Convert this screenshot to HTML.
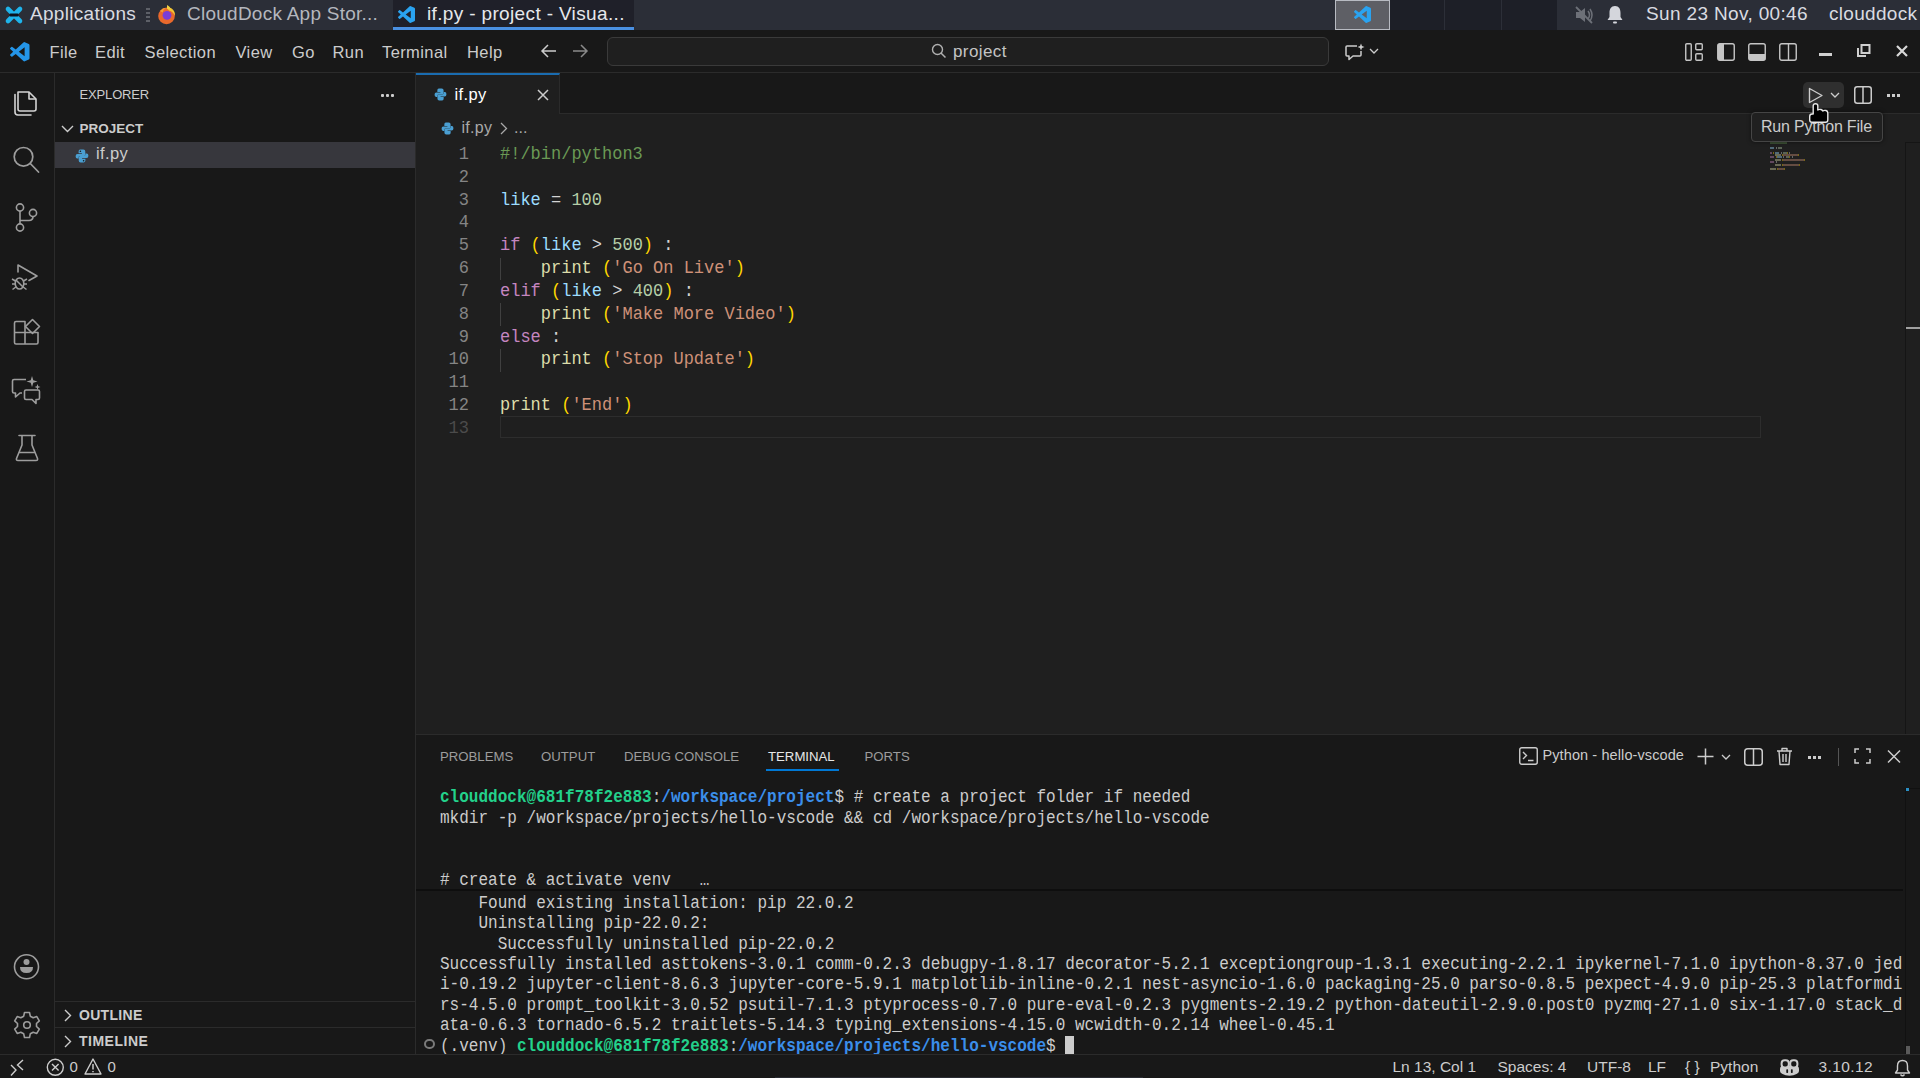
<!DOCTYPE html>
<html><head><meta charset="utf-8">
<style>
*{margin:0;padding:0;box-sizing:border-box}
html,body{width:1920px;height:1078px;overflow:hidden;background:#181818;font-family:"Liberation Sans",sans-serif;color:#cccccc}
.a{position:absolute;white-space:pre}
.mono{font-family:"Liberation Mono",monospace}
svg{position:absolute;overflow:visible}
/* top panel */
#top{position:absolute;left:0;top:0;width:1920px;height:30px;background:#2b2e37}
#menubar{position:absolute;left:0;top:30px;width:1920px;height:43px;background:#181818;border-bottom:1px solid #2b2b2b}
#act{position:absolute;left:0;top:73px;width:55px;height:981px;background:#181818;border-right:1px solid #2b2b2b}
#side{position:absolute;left:55px;top:73px;width:361px;height:981px;background:#181818;border-right:1px solid #2b2b2b}
#editor{position:absolute;left:416px;top:73px;width:1504px;height:661px;background:#1f1f1f}
#tabs{position:absolute;left:416px;top:73px;width:1504px;height:41px;background:#181818;border-bottom:1px solid #2b2b2b}
#tab1{position:absolute;left:416px;top:73px;width:144px;height:41px;background:#1f1f1f;border-top:2px solid #1a6cb0;border-right:1px solid #2b2b2b}
#panel{position:absolute;left:416px;top:734px;width:1504px;height:320px;background:#181818;border-top:1px solid #2b2b2b}
#status{position:absolute;left:0;top:1054px;width:1920px;height:24px;background:#181818;border-top:1px solid #2b2b2b}
.code{font-family:"Liberation Mono",monospace;font-size:17px;line-height:22.83px;transform:scaleY(1.1);transform-origin:0 41.6%}
.term{font-family:"Liberation Mono",monospace;font-size:16.05px;line-height:20.43px;color:#cccccc;transform:scaleY(1.1);transform-origin:0 40%}
.ln{color:#6e7681;text-align:right;width:52px}
.cm{color:#6a9955}.vr{color:#9cdcfe}.nu{color:#b5cea8}.kw{color:#c586c0}.fn{color:#dcdcaa}.st{color:#ce9178}.br{color:#ffd700}.op{color:#d4d4d4}
.g{color:#23d18b;font-weight:bold}.bl{color:#3b8eea;font-weight:bold}
.ic{stroke:#c5c5c5;fill:none;stroke-width:1.4;stroke-linecap:round;stroke-linejoin:round}
</style></head><body>
<div id="top"></div>
<div id="menubar"></div>

<!-- TOP PANEL -->
<svg style="left:5px;top:5.5px" width="18" height="18" viewBox="0 0 18 18"><path d="M3 3 L15 15 M15 3 L3 15" stroke="#1eb4ec" stroke-width="4.6" stroke-linecap="round"/><rect x="4.5" y="7.6" width="9" height="2.8" rx="1" fill="#0c121c"/></svg>
<div class="a" style="left:30px;top:3px;font-size:19px;letter-spacing:0.3px;color:#d9dbe1">Applications</div>
<div style="position:absolute;left:146px;top:8px;width:4px;height:14px;background:repeating-linear-gradient(#73767d 0 2px,transparent 2px 4px);opacity:.7"></div>
<svg style="left:156px;top:4px" width="21" height="21" viewBox="0 0 21 21"><circle cx="10.5" cy="12" r="8.3" fill="#e9692c"/><path d="M10.5 3.7 Q16 3 18.5 8 Q19.3 10.5 18.8 12 Q17.5 7.5 13 6.5Z" fill="#f4c430"/><path d="M11 1 Q14.5 2.5 15 6 Q13 4.5 11 5Z" fill="#f0d040"/><circle cx="11" cy="11.3" r="4.4" fill="#7a3ed6"/><path d="M4 7 Q6.5 3.8 10 3.7 Q7 5.5 6.8 8.5Z" fill="#f39c35"/></svg>
<div class="a" style="left:187px;top:3px;font-size:19px;letter-spacing:0.25px;color:#b4b7be">CloudDock App Stor...</div>
<div style="position:absolute;left:393px;top:0;width:241px;height:30px;background:#1f2029"></div>
<div style="position:absolute;left:393px;top:27px;width:241px;height:3px;background:#4a90e2"></div>
<svg style="left:398px;top:6px" width="17" height="17" viewBox="0 0 100 100"><path d="M96.46 10.8 L75.86 0.87 A6.23 6.23 0 0 0 68.76 2.08 L29.36 38.04 L12.19 25.01 A4.16 4.16 0 0 0 6.87 25.25 L1.36 30.26 A4.17 4.17 0 0 0 1.36 36.42 L16.25 50 L1.36 63.58 A4.17 4.17 0 0 0 1.36 69.74 L6.87 74.75 A4.16 4.16 0 0 0 12.19 74.99 L29.36 61.96 L68.76 97.92 A6.22 6.22 0 0 0 75.86 99.13 L96.46 89.21 A6.25 6.25 0 0 0 100 83.6 V16.4 A6.25 6.25 0 0 0 96.46 10.8Z M75.02 72.7 L45.11 50 L75.02 27.3Z" fill="#2aa3f0" fill-rule="evenodd"/></svg>
<div class="a" style="left:427px;top:3px;font-size:19px;letter-spacing:0.35px;color:#e6e8ec">if.py - project - Visua...</div>
<div style="position:absolute;left:1390px;top:0;width:167px;height:30px;background:#1d1f27"></div>
<div style="position:absolute;left:1444px;top:0;width:1px;height:30px;background:#2c2f38"></div>
<div style="position:absolute;left:1501px;top:0;width:1px;height:30px;background:#2c2f38"></div>
<div style="position:absolute;left:1335px;top:0;width:55px;height:30px;background:#5e5f65;border:1px solid #b8bbc2"></div>
<svg style="left:1354px;top:6px" width="17" height="17" viewBox="0 0 100 100"><path d="M96.46 10.8 L75.86 0.87 A6.23 6.23 0 0 0 68.76 2.08 L29.36 38.04 L12.19 25.01 A4.16 4.16 0 0 0 6.87 25.25 L1.36 30.26 A4.17 4.17 0 0 0 1.36 36.42 L16.25 50 L1.36 63.58 A4.17 4.17 0 0 0 1.36 69.74 L6.87 74.75 A4.16 4.16 0 0 0 12.19 74.99 L29.36 61.96 L68.76 97.92 A6.22 6.22 0 0 0 75.86 99.13 L96.46 89.21 A6.25 6.25 0 0 0 100 83.6 V16.4 A6.25 6.25 0 0 0 96.46 10.8Z M75.02 72.7 L45.11 50 L75.02 27.3Z" fill="#2aa3f0" fill-rule="evenodd"/></svg>
<svg style="left:1574px;top:6px" width="20" height="18" viewBox="0 0 20 18"><path d="M2 6 H6 L11 2 V16 L6 12 H2Z" fill="#6d7078"/><path d="M14 5 Q17 9 14 13 M16 3 Q20 9 16 15" stroke="#6d7078" stroke-width="1.5" fill="none"/><path d="M2 1 L18 17" stroke="#6d7078" stroke-width="1.8"/></svg>
<svg style="left:1606px;top:5px" width="18" height="20" viewBox="0 0 18 20"><path d="M9 1 C5 1 3.5 4 3.5 8 V12 L1.5 15 H16.5 L14.5 12 V8 C14.5 4 13 1 9 1Z" fill="#d4d6dc"/><rect x="7" y="16.5" width="4" height="2" rx="1" fill="#d4d6dc"/></svg>
<div class="a" style="left:1646px;top:3px;font-size:19px;letter-spacing:0.35px;color:#d9dbe1">Sun 23 Nov, 00:46</div>
<div class="a" style="left:1829px;top:3px;font-size:19px;letter-spacing:0.3px;color:#d9dbe1">clouddock</div>


<!-- MENUBAR -->
<svg style="left:9.5px;top:41.5px" width="19.5" height="19.5" viewBox="0 0 100 100"><path d="M96.46 10.8 L75.86 0.87 A6.23 6.23 0 0 0 68.76 2.08 L29.36 38.04 L12.19 25.01 A4.16 4.16 0 0 0 6.87 25.25 L1.36 30.26 A4.17 4.17 0 0 0 1.36 36.42 L16.25 50 L1.36 63.58 A4.17 4.17 0 0 0 1.36 69.74 L6.87 74.75 A4.16 4.16 0 0 0 12.19 74.99 L29.36 61.96 L68.76 97.92 A6.22 6.22 0 0 0 75.86 99.13 L96.46 89.21 A6.25 6.25 0 0 0 100 83.6 V16.4 A6.25 6.25 0 0 0 96.46 10.8Z M75.02 72.7 L45.11 50 L75.02 27.3Z" fill="#2495e8" fill-rule="evenodd"/></svg>
<div class="a" style="left:49.5px;top:42.5px;font-size:16.5px;letter-spacing:0.4px;color:#cccccc">File</div>
<div class="a" style="left:95px;top:42.5px;font-size:16.5px;letter-spacing:0.4px;color:#cccccc">Edit</div>
<div class="a" style="left:144.5px;top:42.5px;font-size:16.5px;letter-spacing:0.4px;color:#cccccc">Selection</div>
<div class="a" style="left:235.5px;top:42.5px;font-size:16.5px;letter-spacing:0.4px;color:#cccccc">View</div>
<div class="a" style="left:292px;top:42.5px;font-size:16.5px;letter-spacing:0.4px;color:#cccccc">Go</div>
<div class="a" style="left:332.5px;top:42.5px;font-size:16.5px;letter-spacing:0.4px;color:#cccccc">Run</div>
<div class="a" style="left:382px;top:42.5px;font-size:16.5px;letter-spacing:0.4px;color:#cccccc">Terminal</div>
<div class="a" style="left:467px;top:42.5px;font-size:16.5px;letter-spacing:0.4px;color:#cccccc">Help</div>
<svg style="left:540px;top:43px" width="17" height="16" viewBox="0 0 17 16"><path d="M8 2 L2 8 L8 14 M2 8 H16" stroke="#cccccc" stroke-width="1.5" fill="none"/></svg>
<svg style="left:572px;top:43px" width="17" height="16" viewBox="0 0 17 16"><path d="M9 2 L15 8 L9 14 M1 8 H15" stroke="#8a8a8a" stroke-width="1.5" fill="none"/></svg>
<div style="position:absolute;left:607px;top:37px;width:722px;height:29px;background:#1f1f1f;border:1px solid #3a3a3a;border-radius:6px"></div>
<svg style="left:931px;top:43px" width="16" height="16" viewBox="0 0 16 16"><circle cx="6.5" cy="6.5" r="5" stroke="#b0b0b0" stroke-width="1.4" fill="none"/><path d="M10 10 L14.5 14.5" stroke="#b0b0b0" stroke-width="1.5"/></svg>
<div class="a" style="left:953px;top:41.5px;font-size:17px;letter-spacing:0.4px;color:#c4c4c4">project</div>
<svg style="left:1344px;top:43px" width="22" height="18" viewBox="0 0 22 18"><path d="M3 3 H13 M17 8 V12 Q17 13 16 13 H9 L5 16.5 V13 H3 Q2 13 2 12 V4 Q2 3 3 3" stroke="#cccccc" stroke-width="1.5" fill="none" stroke-linejoin="round"/><path d="M17 0.5 L18 3 L20.5 4 L18 5 L17 7.5 L16 5 L13.5 4 L16 3Z" fill="#cccccc"/></svg>
<svg style="left:1369px;top:48px" width="10" height="7" viewBox="0 0 10 7"><path d="M1 1 L5 5 L9 1" stroke="#cccccc" stroke-width="1.3" fill="none"/></svg>
<svg style="left:1685px;top:43px" width="18" height="18" viewBox="0 0 18 18"><rect x="0.75" y="0.75" width="5.5" height="16.5" rx="1" stroke="#c5c5c5" stroke-width="1.4" fill="none"/><rect x="10.75" y="0.75" width="6.5" height="6" rx="1" stroke="#c5c5c5" stroke-width="1.4" fill="none"/><rect x="10.75" y="10.75" width="6.5" height="6.5" rx="1" stroke="#c5c5c5" stroke-width="1.4" fill="none"/></svg>
<svg style="left:1717px;top:43px" width="18" height="18" viewBox="0 0 18 18"><rect x="0.75" y="0.75" width="16.5" height="16.5" rx="2" stroke="#c5c5c5" stroke-width="1.4" fill="none"/><rect x="1" y="1" width="6" height="16" fill="#c5c5c5"/></svg>
<svg style="left:1748px;top:43px" width="18" height="18" viewBox="0 0 18 18"><rect x="0.75" y="0.75" width="16.5" height="16.5" rx="2" stroke="#c5c5c5" stroke-width="1.4" fill="none"/><rect x="1" y="11" width="16" height="6" fill="#c5c5c5"/></svg>
<svg style="left:1779px;top:43px" width="18" height="18" viewBox="0 0 18 18"><rect x="0.75" y="0.75" width="16.5" height="16.5" rx="2" stroke="#c5c5c5" stroke-width="1.4" fill="none"/><path d="M9.5 1 V17" stroke="#c5c5c5" stroke-width="1.4"/></svg>
<div style="position:absolute;left:1819px;top:53px;width:13px;height:3px;background:#d0d0d0"></div>
<svg style="left:1857px;top:44px" width="14" height="13" viewBox="0 0 14 13"><rect x="4.5" y="1" width="8" height="8" stroke="#d0d0d0" stroke-width="2" fill="none"/><path d="M1 4 V12 H9" stroke="#d0d0d0" stroke-width="2" fill="none"/></svg>
<svg style="left:1896px;top:45px" width="12" height="12" viewBox="0 0 12 12"><path d="M1 1 L11 11 M11 1 L1 11" stroke="#d8d8d8" stroke-width="2.2"/></svg>
<div id="act"></div>
<div id="side"></div>
<!-- ACTIVITY BAR -->
<svg style="left:13px;top:88px" width="26" height="30" viewBox="0 0 26 30"><path d="M5 4 H16 L23 11 V21 Q23 23 21 23 H7 Q5 23 5 21Z" stroke="#d4d4d4" stroke-width="1.6" fill="none" stroke-linejoin="round"/><path d="M16 4 V11 H23" stroke="#d4d4d4" stroke-width="1.6" fill="none" stroke-linejoin="round"/><path d="M2 6.5 V24 Q2 27 5 27 H18" stroke="#d4d4d4" stroke-width="1.6" fill="none" stroke-linecap="round"/></svg>
<svg style="left:12px;top:145px" width="30" height="30" viewBox="0 0 30 30"><circle cx="11.5" cy="11.8" r="9.3" stroke="#9d9d9d" stroke-width="1.7" fill="none"/><path d="M18.3 18.5 L26.5 27" stroke="#9d9d9d" stroke-width="1.8" stroke-linecap="round"/></svg>
<svg style="left:12px;top:202px" width="30" height="32" viewBox="0 0 30 32"><circle cx="8" cy="5.5" r="3.6" stroke="#9d9d9d" stroke-width="1.6" fill="none"/><circle cx="21" cy="11" r="3.6" stroke="#9d9d9d" stroke-width="1.6" fill="none"/><circle cx="8" cy="25.5" r="3.6" stroke="#9d9d9d" stroke-width="1.6" fill="none"/><path d="M8 9 V22 M21 14.6 Q21 18.5 17 18.5 H8" stroke="#9d9d9d" stroke-width="1.6" fill="none"/></svg>
<svg style="left:10px;top:262px" width="32" height="32" viewBox="0 0 32 32"><path d="M8 10 V3 L27 14 L19 18.5" stroke="#9d9d9d" stroke-width="1.6" fill="none" stroke-linejoin="round" stroke-linecap="round"/><ellipse cx="9.5" cy="21.5" rx="4.3" ry="5.5" stroke="#9d9d9d" stroke-width="1.6" fill="none"/><path d="M2 17 L5.5 19 M2 22 H5 M2.5 27.5 L5.8 25 M17 17 L13.5 19 M17 22 H14 M16.5 27.5 L13.2 25 M6 18 L13 25" stroke="#9d9d9d" stroke-width="1.5" fill="none"/></svg>
<svg style="left:13px;top:318px" width="30" height="30" viewBox="0 0 30 30"><path d="M3 3.5 H12 V26 H3 Q1.5 26 1.5 24.5 V5 Q1.5 3.5 3 3.5Z M1.5 14.5 H23 M12 14.5 H25 V24.5 Q25 26 23.5 26 H12" stroke="#9d9d9d" stroke-width="1.6" fill="none" stroke-linejoin="round"/><path d="M19.5 1.5 L26.5 8.5 L19.5 15.5 L12.5 8.5Z" stroke="#9d9d9d" stroke-width="1.6" fill="none" stroke-linejoin="round"/></svg>
<svg style="left:11px;top:376px" width="32" height="30" viewBox="0 0 32 30"><path d="M15 3.5 H3 Q1.5 3.5 1.5 5 V15.5 Q1.5 17 3 17 H4.5 V21 L9 17 H11" stroke="#9d9d9d" stroke-width="1.6" fill="none" stroke-linejoin="round"/><path d="M15 14 H27 Q28.5 14 28.5 15.5 V22 Q28.5 23.5 27 23.5 H25 V27.5 L21 23.5 H15 Q13.5 23.5 13.5 22 V15.5 Q13.5 14 15 14Z" stroke="#9d9d9d" stroke-width="1.6" fill="none" stroke-linejoin="round"/><path d="M21 0 L22.3 4.2 L26.5 5.5 L22.3 6.8 L21 11 L19.7 6.8 L15.5 5.5 L19.7 4.2Z" fill="#9d9d9d"/><path d="M26.5 8 L27.3 10.2 L29.5 11 L27.3 11.8 L26.5 14 L25.7 11.8 L23.5 11 L25.7 10.2Z" fill="#9d9d9d"/></svg>
<svg style="left:15px;top:434px" width="24" height="30" viewBox="0 0 24 30"><path d="M4 1.5 H20 M7 1.5 V11 L1.5 24.5 Q1 26.5 3 26.5 H21 Q23 26.5 22.5 24.5 L17 11 V1.5 M4.5 18.5 H19.5" stroke="#9d9d9d" stroke-width="1.6" fill="none" stroke-linejoin="round" stroke-linecap="round"/></svg>
<svg style="left:13px;top:953px" width="28" height="28" viewBox="0 0 28 28"><circle cx="13.5" cy="13.8" r="12" stroke="#9d9d9d" stroke-width="1.6" fill="none"/><circle cx="13.5" cy="9" r="3" fill="#9d9d9d"/><path d="M7 14 H20 Q20 20 13.5 20 Q7 20 7 14Z" fill="#9d9d9d"/></svg>
<svg style="left:13px;top:1011px" width="28" height="28" viewBox="0 0 28 28"><path d="M11.5 1.5 H16.5 L17.3 5.2 L20.2 6.8 L23.8 5.6 L26.3 9.9 L23.5 12.5 V15.5 L26.3 18.1 L23.8 22.4 L20.2 21.2 L17.3 22.8 L16.5 26.5 H11.5 L10.7 22.8 L7.8 21.2 L4.2 22.4 L1.7 18.1 L4.5 15.5 V12.5 L1.7 9.9 L4.2 5.6 L7.8 6.8 L10.7 5.2Z" stroke="#9d9d9d" stroke-width="1.6" fill="none" stroke-linejoin="round"/><circle cx="14" cy="14" r="3.3" stroke="#9d9d9d" stroke-width="1.6" fill="none"/></svg>


<!-- SIDEBAR -->
<div class="a" style="left:79.5px;top:87px;font-size:13px;letter-spacing:-0.15px;color:#cccccc">EXPLORER</div>
<div style="position:absolute;left:381px;top:94px;width:3px;height:3px;background:#cccccc;border-radius:1px"></div>
<div style="position:absolute;left:386px;top:94px;width:3px;height:3px;background:#cccccc;border-radius:1px"></div>
<div style="position:absolute;left:391px;top:94px;width:3px;height:3px;background:#cccccc;border-radius:1px"></div>
<svg style="left:61px;top:125px" width="13" height="8" viewBox="0 0 13 8"><path d="M1 1 L6.5 6.5 L12 1" stroke="#cccccc" stroke-width="1.4" fill="none"/></svg>
<div class="a" style="left:79.5px;top:120.5px;font-size:13.5px;font-weight:bold;color:#cccccc">PROJECT</div>
<div style="position:absolute;left:55px;top:142px;width:360px;height:26px;background:#37373d"></div>
<svg style="left:74.5px;top:148.5px" width="14" height="14" viewBox="0 0 14 14"><path d="M5.2 0.6 H8.4 Q10.3 0.6 10.3 2.5 V5.6 Q10.3 7.1 8.8 7.1 H5 Q3.6 7.1 3.6 8.5 V9.6 H2.3 Q0.6 9.6 0.6 7.3 Q0.6 4.9 2.5 4.9 H6.9 V4.3 H3.6 V2.4 Q3.6 0.6 5.2 0.6Z" fill="#4a9fd2"/><circle cx="5.4" cy="2.3" r="0.8" fill="#181818"/><path d="M8.8 13.4 H5.6 Q3.7 13.4 3.7 11.5 V8.4 Q3.7 6.9 5.2 6.9 H9 Q10.4 6.9 10.4 5.5 V4.4 H11.7 Q13.4 4.4 13.4 6.7 Q13.4 9.1 11.5 9.1 H7.1 V9.7 H10.4 V11.6 Q10.4 13.4 8.8 13.4Z" fill="#4a9fd2"/><circle cx="8.6" cy="11.7" r="0.8" fill="#181818"/></svg>
<div class="a" style="left:96px;top:144px;font-size:16.5px;letter-spacing:0.4px;color:#cccccc">if.py</div>
<div style="position:absolute;left:55px;top:1001px;width:360px;height:1px;background:#2b2b2b"></div>
<svg style="left:64px;top:1009px" width="8" height="13" viewBox="0 0 8 13"><path d="M1 1 L6.5 6.5 L1 12" stroke="#cccccc" stroke-width="1.4" fill="none"/></svg>
<div class="a" style="left:79px;top:1006.5px;font-size:14px;font-weight:bold;letter-spacing:0.3px;color:#cccccc">OUTLINE</div>
<div style="position:absolute;left:55px;top:1027px;width:360px;height:1px;background:#2b2b2b"></div>
<svg style="left:64px;top:1035px" width="8" height="13" viewBox="0 0 8 13"><path d="M1 1 L6.5 6.5 L1 12" stroke="#cccccc" stroke-width="1.4" fill="none"/></svg>
<div class="a" style="left:79px;top:1033px;font-size:14px;font-weight:bold;letter-spacing:0.5px;color:#cccccc">TIMELINE</div>
<div id="editor"></div>
<div id="tabs"></div>
<div id="tab1"></div>

<!-- EDITOR -->
<svg style="left:433.5px;top:87.5px" width="13" height="13" viewBox="0 0 14 14"><path d="M5.2 0.6 H8.4 Q10.3 0.6 10.3 2.5 V5.6 Q10.3 7.1 8.8 7.1 H5 Q3.6 7.1 3.6 8.5 V9.6 H2.3 Q0.6 9.6 0.6 7.3 Q0.6 4.9 2.5 4.9 H6.9 V4.3 H3.6 V2.4 Q3.6 0.6 5.2 0.6Z" fill="#4a9fd2"/><path d="M8.8 13.4 H5.6 Q3.7 13.4 3.7 11.5 V8.4 Q3.7 6.9 5.2 6.9 H9 Q10.4 6.9 10.4 5.5 V4.4 H11.7 Q13.4 4.4 13.4 6.7 Q13.4 9.1 11.5 9.1 H7.1 V9.7 H10.4 V11.6 Q10.4 13.4 8.8 13.4Z" fill="#4a9fd2"/></svg>
<div class="a" style="left:454.5px;top:85px;font-size:16.5px;letter-spacing:0.4px;color:#ffffff">if.py</div>
<svg style="left:537px;top:89px" width="12" height="12" viewBox="0 0 12 12"><path d="M1 1 L11 11 M11 1 L1 11" stroke="#cccccc" stroke-width="1.5"/></svg>
<svg style="left:440.5px;top:122px" width="13" height="13" viewBox="0 0 14 14"><path d="M5.2 0.6 H8.4 Q10.3 0.6 10.3 2.5 V5.6 Q10.3 7.1 8.8 7.1 H5 Q3.6 7.1 3.6 8.5 V9.6 H2.3 Q0.6 9.6 0.6 7.3 Q0.6 4.9 2.5 4.9 H6.9 V4.3 H3.6 V2.4 Q3.6 0.6 5.2 0.6Z" fill="#4a9fd2"/><path d="M8.8 13.4 H5.6 Q3.7 13.4 3.7 11.5 V8.4 Q3.7 6.9 5.2 6.9 H9 Q10.4 6.9 10.4 5.5 V4.4 H11.7 Q13.4 4.4 13.4 6.7 Q13.4 9.1 11.5 9.1 H7.1 V9.7 H10.4 V11.6 Q10.4 13.4 8.8 13.4Z" fill="#4a9fd2"/></svg>
<div class="a" style="left:461.5px;top:119px;font-size:16px;letter-spacing:0.3px;color:#a9a9a9">if.py</div>
<svg style="left:500px;top:122px" width="8" height="13" viewBox="0 0 8 13"><path d="M1 1 L6.5 6.5 L1 12" stroke="#a9a9a9" stroke-width="1.3" fill="none"/></svg>
<div class="a" style="left:514px;top:119px;font-size:16px;color:#a9a9a9">...</div>
<div style="position:absolute;left:500px;top:416px;width:1261px;height:22px;border:1px solid #2d2d2d"></div>
<div class="a code" style="left:417px;top:143.00px;width:52px;text-align:right;color:#858585">1</div>
<div class="a code" style="left:500px;top:143.00px"><span class="cm">#!/bin/python3</span></div>
<div class="a code" style="left:417px;top:165.83px;width:52px;text-align:right;color:#858585">2</div>
<div class="a code" style="left:417px;top:188.66px;width:52px;text-align:right;color:#858585">3</div>
<div class="a code" style="left:500px;top:188.66px"><span class="vr">like</span> <span class="op">=</span> <span class="nu">100</span></div>
<div class="a code" style="left:417px;top:211.49px;width:52px;text-align:right;color:#858585">4</div>
<div class="a code" style="left:417px;top:234.32px;width:52px;text-align:right;color:#858585">5</div>
<div class="a code" style="left:500px;top:234.32px"><span class="kw">if</span> <span class="br">(</span><span class="vr">like</span> <span class="op">&gt;</span> <span class="nu">500</span><span class="br">)</span> <span class="op">:</span></div>
<div class="a code" style="left:417px;top:257.15px;width:52px;text-align:right;color:#858585">6</div>
<div class="a code" style="left:500px;top:257.15px">    <span class="fn">print</span> <span class="br">(</span><span class="st">'Go On Live'</span><span class="br">)</span></div>
<div class="a code" style="left:417px;top:279.98px;width:52px;text-align:right;color:#858585">7</div>
<div class="a code" style="left:500px;top:279.98px"><span class="kw">elif</span> <span class="br">(</span><span class="vr">like</span> <span class="op">&gt;</span> <span class="nu">400</span><span class="br">)</span> <span class="op">:</span></div>
<div class="a code" style="left:417px;top:302.81px;width:52px;text-align:right;color:#858585">8</div>
<div class="a code" style="left:500px;top:302.81px">    <span class="fn">print</span> <span class="br">(</span><span class="st">'Make More Video'</span><span class="br">)</span></div>
<div class="a code" style="left:417px;top:325.64px;width:52px;text-align:right;color:#858585">9</div>
<div class="a code" style="left:500px;top:325.64px"><span class="kw">else</span> <span class="op">:</span></div>
<div class="a code" style="left:417px;top:348.47px;width:52px;text-align:right;color:#858585">10</div>
<div class="a code" style="left:500px;top:348.47px">    <span class="fn">print</span> <span class="br">(</span><span class="st">'Stop Update'</span><span class="br">)</span></div>
<div class="a code" style="left:417px;top:371.30px;width:52px;text-align:right;color:#858585">11</div>
<div class="a code" style="left:417px;top:394.13px;width:52px;text-align:right;color:#858585">12</div>
<div class="a code" style="left:500px;top:394.13px"><span class="fn">print</span> <span class="br">(</span><span class="st">'End'</span><span class="br">)</span></div>
<div class="a code" style="left:417px;top:416.96px;width:52px;text-align:right;color:#4b4b4b">13</div>
<div style="position:absolute;left:500px;top:257.65px;width:1px;height:22.83px;background:#404040"></div>
<div style="position:absolute;left:500px;top:303.31px;width:1px;height:22.83px;background:#404040"></div>
<div style="position:absolute;left:500px;top:348.97px;width:1px;height:22.83px;background:#404040"></div>

<div style="position:absolute;left:1803px;top:82px;width:41px;height:26px;background:#2f2f2f;border-radius:5px"></div>
<svg style="left:1808px;top:87px" width="16" height="17" viewBox="0 0 16 17"><path d="M1.5 1.5 L14 8.5 L1.5 15.5Z" stroke="#cccccc" stroke-width="1.4" fill="none" stroke-linejoin="round"/></svg>
<svg style="left:1830px;top:92px" width="10" height="7" viewBox="0 0 10 7"><path d="M1 1 L5 5 L9 1" stroke="#cccccc" stroke-width="1.3" fill="none"/></svg>
<svg style="left:1854px;top:86px" width="18" height="18" viewBox="0 0 18 18"><rect x="0.75" y="0.75" width="16.5" height="16.5" rx="2.5" stroke="#cccccc" stroke-width="1.5" fill="none"/><path d="M9 1 V17" stroke="#cccccc" stroke-width="1.5"/></svg>
<div style="position:absolute;left:1887px;top:94px;width:3px;height:3px;background:#cccccc"></div>
<div style="position:absolute;left:1892px;top:94px;width:3px;height:3px;background:#cccccc"></div>
<div style="position:absolute;left:1897px;top:94px;width:3px;height:3px;background:#cccccc"></div>
<div style="position:absolute;left:1905px;top:142px;width:1px;height:592px;background:#151515"></div>
<div style="position:absolute;left:1905px;top:142px;width:15px;height:1px;background:#151515"></div>
<div style="position:absolute;left:1906px;top:327px;width:14px;height:2px;background:#a0a0a0"></div>
<div id="panel"></div>
<!-- PANEL -->
<div class="a" style="left:440px;top:748.5px;font-size:13.2px;color:#9d9d9d">PROBLEMS</div>
<div class="a" style="left:541px;top:748.5px;font-size:13.2px;color:#9d9d9d">OUTPUT</div>
<div class="a" style="left:624px;top:748.5px;font-size:13.2px;color:#9d9d9d">DEBUG CONSOLE</div>
<div class="a" style="left:768px;top:748.5px;font-size:13.2px;color:#e7e7e7">TERMINAL</div>
<div style="position:absolute;left:766px;top:769px;width:73px;height:2px;background:#0078d4"></div>
<div class="a" style="left:864.5px;top:748.5px;font-size:13.2px;color:#9d9d9d">PORTS</div>
<svg style="left:1519px;top:747px" width="19" height="18" viewBox="0 0 19 18"><rect x="0.75" y="0.75" width="17.5" height="16.5" rx="2" stroke="#cccccc" stroke-width="1.4" fill="none"/><path d="M4 5 L7.5 8.5 L4 12 M9 13.5 H14.5" stroke="#cccccc" stroke-width="1.4" fill="none"/></svg>
<div class="a" style="left:1542.5px;top:746.5px;font-size:14.5px;letter-spacing:0.1px;color:#cccccc">Python - hello-vscode</div>
<svg style="left:1697px;top:748px" width="17" height="17" viewBox="0 0 17 17"><path d="M8.5 0.5 V16.5 M0.5 8.5 H16.5" stroke="#cccccc" stroke-width="1.5"/></svg>
<svg style="left:1721px;top:754px" width="10" height="7" viewBox="0 0 10 7"><path d="M1 1 L5 5 L9 1" stroke="#cccccc" stroke-width="1.3" fill="none"/></svg>
<svg style="left:1744px;top:748px" width="19" height="18" viewBox="0 0 19 18"><rect x="0.75" y="0.75" width="17.5" height="16.5" rx="3" stroke="#cccccc" stroke-width="1.5" fill="none"/><path d="M9.5 1 V17" stroke="#cccccc" stroke-width="1.5"/></svg>
<svg style="left:1776px;top:747px" width="17" height="19" viewBox="0 0 17 19"><path d="M1 4 H16 M6 4 V1.5 H11 V4 M3 4 L4 17.5 H13 L14 4 M7 7 V15 M10 7 V15" stroke="#cccccc" stroke-width="1.4" fill="none" stroke-linejoin="round"/></svg>
<div style="position:absolute;left:1808px;top:756px;width:3px;height:3px;background:#cccccc"></div>
<div style="position:absolute;left:1813px;top:756px;width:3px;height:3px;background:#cccccc"></div>
<div style="position:absolute;left:1818px;top:756px;width:3px;height:3px;background:#cccccc"></div>
<div style="position:absolute;left:1838px;top:748px;width:1px;height:18px;background:#555555"></div>
<svg style="left:1854px;top:748px" width="17" height="16" viewBox="0 0 17 16"><path d="M1 5 V1 H5 M12 1 H16 V5 M16 11 V15 H12 M5 15 H1 V11" stroke="#cccccc" stroke-width="1.5" fill="none"/></svg>
<svg style="left:1887px;top:750px" width="14" height="13" viewBox="0 0 14 13"><path d="M1 0.5 L13 12.5 M13 0.5 L1 12.5" stroke="#cccccc" stroke-width="1.5"/></svg>
<div class="a term" style="left:440px;top:787.40px"><span class="g">clouddock@681f78f2e883</span>:<span class="bl">/workspace/project</span>$ # create a project folder if needed</div>
<div class="a term" style="left:440px;top:808.00px">mkdir -p /workspace/projects/hello-vscode &amp;&amp; cd /workspace/projects/hello-vscode</div>
<div class="a term" style="left:440px;top:869.80px"># create &amp; activate venv   …</div>
<div style="position:absolute;left:416px;top:889px;width:1487px;height:2px;background:#0e0e0e"></div>
<div class="a term" style="left:440px;top:892.70px">    Found existing installation: pip 22.0.2</div>
<div class="a term" style="left:440px;top:913.13px">    Uninstalling pip-22.0.2:</div>
<div class="a term" style="left:440px;top:933.56px">      Successfully uninstalled pip-22.0.2</div>
<div class="a term" style="left:440px;top:953.99px">Successfully installed asttokens-3.0.1 comm-0.2.3 debugpy-1.8.17 decorator-5.2.1 exceptiongroup-1.3.1 executing-2.2.1 ipykernel-7.1.0 ipython-8.37.0 jed</div>
<div class="a term" style="left:440px;top:974.42px">i-0.19.2 jupyter-client-8.6.3 jupyter-core-5.9.1 matplotlib-inline-0.2.1 nest-asyncio-1.6.0 packaging-25.0 parso-0.8.5 pexpect-4.9.0 pip-25.3 platformdi</div>
<div class="a term" style="left:440px;top:994.85px">rs-4.5.0 prompt_toolkit-3.0.52 psutil-7.1.3 ptyprocess-0.7.0 pure-eval-0.2.3 pygments-2.19.2 python-dateutil-2.9.0.post0 pyzmq-27.1.0 six-1.17.0 stack_d</div>
<div class="a term" style="left:440px;top:1015.28px">ata-0.6.3 tornado-6.5.2 traitlets-5.14.3 typing_extensions-4.15.0 wcwidth-0.2.14 wheel-0.45.1</div>
<div class="a term" style="left:440px;top:1035.71px">(.venv) <span class="g">clouddock@681f78f2e883</span>:<span class="bl">/workspace/projects/hello-vscode</span>$ </div>
<div style="position:absolute;left:1065px;top:1036px;width:9px;height:18px;background:#cccccc"></div>
<div style="position:absolute;left:424px;top:1038.5px;width:10.5px;height:10.5px;border:2px solid #7a7a7a;border-radius:50%"></div>
<div style="position:absolute;left:1905px;top:788px;width:1px;height:266px;background:#111111"></div>
<div style="position:absolute;left:1905px;top:788px;width:15px;height:1px;background:#111111"></div>
<div style="position:absolute;left:1906px;top:788px;width:3px;height:3px;background:#2a8fc4"></div>
<div style="position:absolute;left:1906px;top:1046px;width:4px;height:8px;background:#5a5a5a"></div>


<!-- MINIMAP -->
<div style="position:absolute;left:1769.6px;top:142.0px;width:17.1px;height:2px;background:#6a9955;opacity:.4"></div>
<div style="position:absolute;left:1769.6px;top:146.8px;width:4.9px;height:2px;background:#9cdcfe;opacity:.4"></div>
<div style="position:absolute;left:1775.7px;top:146.8px;width:1.2px;height:2px;background:#d4d4d4;opacity:.4"></div>
<div style="position:absolute;left:1778.1px;top:146.8px;width:3.7px;height:2px;background:#b5cea8;opacity:.4"></div>
<div style="position:absolute;left:1769.6px;top:151.6px;width:2.4px;height:2px;background:#c586c0;opacity:.4"></div>
<div style="position:absolute;left:1773.3px;top:151.6px;width:1.2px;height:2px;background:#ffd700;opacity:.4"></div>
<div style="position:absolute;left:1774.5px;top:151.6px;width:4.9px;height:2px;background:#9cdcfe;opacity:.4"></div>
<div style="position:absolute;left:1780.6px;top:151.6px;width:1.2px;height:2px;background:#d4d4d4;opacity:.4"></div>
<div style="position:absolute;left:1783.0px;top:151.6px;width:3.7px;height:2px;background:#b5cea8;opacity:.4"></div>
<div style="position:absolute;left:1786.7px;top:151.6px;width:1.2px;height:2px;background:#ffd700;opacity:.4"></div>
<div style="position:absolute;left:1789.1px;top:151.6px;width:1.2px;height:2px;background:#d4d4d4;opacity:.4"></div>
<div style="position:absolute;left:1774.5px;top:154.0px;width:6.1px;height:2px;background:#dcdcaa;opacity:.4"></div>
<div style="position:absolute;left:1781.8px;top:154.0px;width:1.2px;height:2px;background:#ffd700;opacity:.4"></div>
<div style="position:absolute;left:1783.0px;top:154.0px;width:14.6px;height:2px;background:#ce9178;opacity:.4"></div>
<div style="position:absolute;left:1797.7px;top:154.0px;width:1.2px;height:2px;background:#ffd700;opacity:.4"></div>
<div style="position:absolute;left:1769.6px;top:156.4px;width:4.9px;height:2px;background:#c586c0;opacity:.4"></div>
<div style="position:absolute;left:1775.7px;top:156.4px;width:1.2px;height:2px;background:#ffd700;opacity:.4"></div>
<div style="position:absolute;left:1776.9px;top:156.4px;width:4.9px;height:2px;background:#9cdcfe;opacity:.4"></div>
<div style="position:absolute;left:1783.0px;top:156.4px;width:1.2px;height:2px;background:#d4d4d4;opacity:.4"></div>
<div style="position:absolute;left:1785.5px;top:156.4px;width:3.7px;height:2px;background:#b5cea8;opacity:.4"></div>
<div style="position:absolute;left:1789.1px;top:156.4px;width:1.2px;height:2px;background:#ffd700;opacity:.4"></div>
<div style="position:absolute;left:1791.6px;top:156.4px;width:1.2px;height:2px;background:#d4d4d4;opacity:.4"></div>
<div style="position:absolute;left:1774.5px;top:158.8px;width:6.1px;height:2px;background:#dcdcaa;opacity:.4"></div>
<div style="position:absolute;left:1781.8px;top:158.8px;width:1.2px;height:2px;background:#ffd700;opacity:.4"></div>
<div style="position:absolute;left:1783.0px;top:158.8px;width:20.7px;height:2px;background:#ce9178;opacity:.4"></div>
<div style="position:absolute;left:1803.8px;top:158.8px;width:1.2px;height:2px;background:#ffd700;opacity:.4"></div>
<div style="position:absolute;left:1769.6px;top:161.2px;width:4.9px;height:2px;background:#c586c0;opacity:.4"></div>
<div style="position:absolute;left:1775.7px;top:161.2px;width:1.2px;height:2px;background:#d4d4d4;opacity:.4"></div>
<div style="position:absolute;left:1774.5px;top:163.6px;width:6.1px;height:2px;background:#dcdcaa;opacity:.4"></div>
<div style="position:absolute;left:1781.8px;top:163.6px;width:1.2px;height:2px;background:#ffd700;opacity:.4"></div>
<div style="position:absolute;left:1783.0px;top:163.6px;width:15.9px;height:2px;background:#ce9178;opacity:.4"></div>
<div style="position:absolute;left:1798.9px;top:163.6px;width:1.2px;height:2px;background:#ffd700;opacity:.4"></div>
<div style="position:absolute;left:1769.6px;top:168.4px;width:6.1px;height:2px;background:#dcdcaa;opacity:.4"></div>
<div style="position:absolute;left:1776.9px;top:168.4px;width:1.2px;height:2px;background:#ffd700;opacity:.4"></div>
<div style="position:absolute;left:1778.1px;top:168.4px;width:6.1px;height:2px;background:#ce9178;opacity:.4"></div>
<div style="position:absolute;left:1784.2px;top:168.4px;width:1.2px;height:2px;background:#ffd700;opacity:.4"></div>
<!-- TOOLTIP -->
<div style="position:absolute;left:1751px;top:112px;width:132px;height:30px;background:#202020;border:1px solid #454545;border-radius:4px;box-shadow:0 0 4px rgba(0,0,0,.5)"></div>
<div class="a" style="left:1761px;top:118px;font-size:16px;letter-spacing:-0.2px;color:#cccccc">Run Python File</div>
<svg style="left:1809px;top:103px" width="20" height="20" viewBox="0 0 20 20"><path d="M4.2 11 V2.8 Q4.2 0.7 6.5 0.7 Q8.8 0.7 8.8 2.8 V7 Q10 6 12 6.5 Q13.4 7 13.8 8 Q15 7 17 7.5 Q18.8 8 18.8 10 V17 Q18.8 19.3 16.5 19.3 H3 Q0.7 19.3 0.7 17 V13.5 Q0.7 11 3 11Z" fill="#000" stroke="#e8e8e8" stroke-width="1.4" stroke-linejoin="round"/></svg>

<div id="status"></div>

<!-- STATUS -->
<svg style="left:10px;top:1059px" width="15" height="18" viewBox="0 0 15 18"><path d="M1 6 L6 11 L1 16.5 M13 1 L7.5 6 L13 11" stroke="#cccccc" stroke-width="1.4" fill="none"/></svg>
<svg style="left:46px;top:1058px" width="19" height="19" viewBox="0 0 19 19"><circle cx="9.3" cy="9.3" r="8" stroke="#cccccc" stroke-width="1.4" fill="none"/><path d="M6 6 L12.6 12.6 M12.6 6 L6 12.6" stroke="#cccccc" stroke-width="1.4"/></svg>
<div class="a" style="left:69.5px;top:1058px;font-size:15px;color:#cccccc">0</div>
<svg style="left:84px;top:1058px" width="18" height="17" viewBox="0 0 18 17"><path d="M9 1 L17 16 H1Z" stroke="#cccccc" stroke-width="1.4" fill="none" stroke-linejoin="round"/><path d="M9 6 V11.5 M9 13 V14.3" stroke="#cccccc" stroke-width="1.5"/></svg>
<div class="a" style="left:107.5px;top:1058px;font-size:15px;color:#cccccc">0</div>
<div class="a" style="left:1392.5px;top:1058px;font-size:15.5px;color:#cccccc">Ln 13, Col 1</div>
<div class="a" style="left:1497.5px;top:1058px;font-size:15.5px;color:#cccccc">Spaces: 4</div>
<div class="a" style="left:1587px;top:1058px;font-size:15.5px;color:#cccccc">UTF-8</div>
<div class="a" style="left:1648px;top:1058px;font-size:15.5px;color:#cccccc">LF</div>
<div class="a" style="left:1685px;top:1058px;font-size:15.5px;color:#cccccc">{ }</div>
<div class="a" style="left:1710px;top:1058px;font-size:15.5px;color:#cccccc">Python</div>
<svg style="left:1779px;top:1059px" width="21" height="17" viewBox="0 0 21 17"><path d="M2.5 7 Q1 8 1 10 V12 Q1 13.5 3 14.8 Q6.5 16.8 10.5 16.8 Q14.5 16.8 18 14.8 Q20 13.5 20 12 V10 Q20 8 18.5 7Z" fill="#cccccc"/><rect x="2.6" y="1.2" width="7.2" height="7.2" rx="3" stroke="#cccccc" stroke-width="2" fill="#181818"/><rect x="11.2" y="1.2" width="7.2" height="7.2" rx="3" stroke="#cccccc" stroke-width="2" fill="#181818"/><rect x="7.3" y="10.3" width="1.8" height="3.6" rx=".6" fill="#181818"/><rect x="11.9" y="10.3" width="1.8" height="3.6" rx=".6" fill="#181818"/></svg>
<div class="a" style="left:1818.5px;top:1058px;font-size:15.5px;letter-spacing:0.4px;color:#cccccc">3.10.12</div>
<svg style="left:1894px;top:1059px" width="17" height="18" viewBox="0 0 17 18"><path d="M8.5 1.5 Q3.5 1.5 3.5 7 V11 L1.5 14 H15.5 L13.5 11 V7 Q13.5 1.5 8.5 1.5Z M6.5 15.5 Q8.5 18 10.5 15.5" stroke="#cccccc" stroke-width="1.4" fill="none" stroke-linejoin="round"/></svg>
<div style="position:absolute;left:775px;top:1077px;width:368px;height:1px;background:#2a2c33"></div>
</body></html>
